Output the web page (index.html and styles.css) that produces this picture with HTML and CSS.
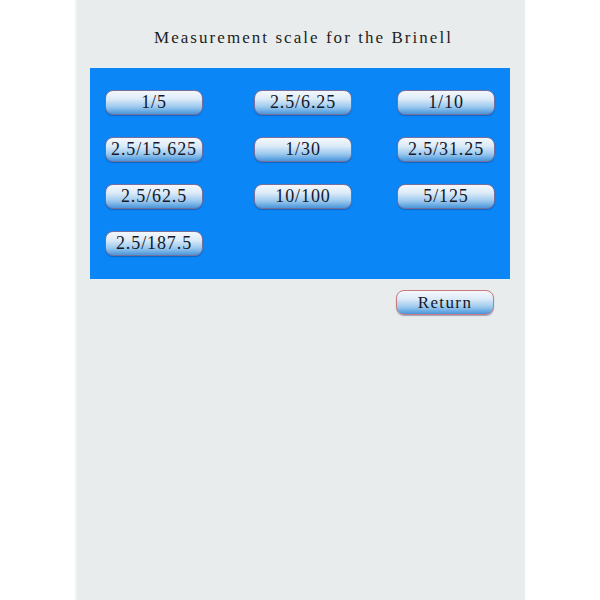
FILE: index.html
```html
<!DOCTYPE html>
<html>
<head>
<meta charset="utf-8">
<link rel="stylesheet" href="styles.css">
</head>
<body>
<div class="panel">
  <div class="title">Measurement scale for the Brinell</div>
  <div class="box">
    <button class="btn">1/5</button>
    <button class="btn">2.5/6.25</button>
    <button class="btn">1/10</button>
    <button class="btn">2.5/15.625</button>
    <button class="btn">1/30</button>
    <button class="btn">2.5/31.25</button>
    <button class="btn">2.5/62.5</button>
    <button class="btn">10/100</button>
    <button class="btn">5/125</button>
    <button class="btn">2.5/187.5</button>
  </div>
  <div class="actions">
    <button class="btn ret">Return</button>
  </div>
</div>
</body>
</html>
```
FILE: styles.css
```css
html, body {
  margin: 0;
  padding: 0;
  background: #ffffff;
}
.panel {
  width: 450px;
  min-height: 600px;
  margin: 0 0 0 75px;
  background: #e8ecec;
  border-left: 2px solid #f1f4f4;
  box-sizing: border-box;
  padding-top: 28px;
  font-family: "Liberation Serif", serif;
}
.title {
  height: 20px;
  line-height: 20px;
  font-size: 17px;
  letter-spacing: 2.05px;
  color: #1e1e1e;
  text-align: center;
  padding-left: 5px;
}
.box {
  margin: 20px 0 0 13px;
  width: 420px;
  box-sizing: border-box;
  background: #0b86f6;
  padding: 22px 0 23px 15px;
  display: grid;
  grid-template-columns: 149px 143px 98px;
  row-gap: 22px;
}
.btn {
  width: 98px;
  height: 25px;
  padding: 0;
  box-sizing: border-box;
  border: 1px solid #76709f;
  border-radius: 8px;
  background: linear-gradient(to bottom, #f4f8fc 0%, #dcebf8 35%, #9ac8ee 70%, #5ea3e0 92%, #4d96d8 100%);
  box-shadow: 0 1px 1px rgba(20, 40, 100, 0.35);
  font-family: "Liberation Serif", serif;
  font-size: 18px;
  letter-spacing: 0.9px;
  line-height: 23px;
  color: #15182a;
  text-align: center;
  white-space: nowrap;
}
.actions {
  display: flex;
  margin: 11px 0 0 319px;
}
.ret {
  border-color: #c87a80;
  font-size: 17px;
  letter-spacing: 1.4px;
}
```
